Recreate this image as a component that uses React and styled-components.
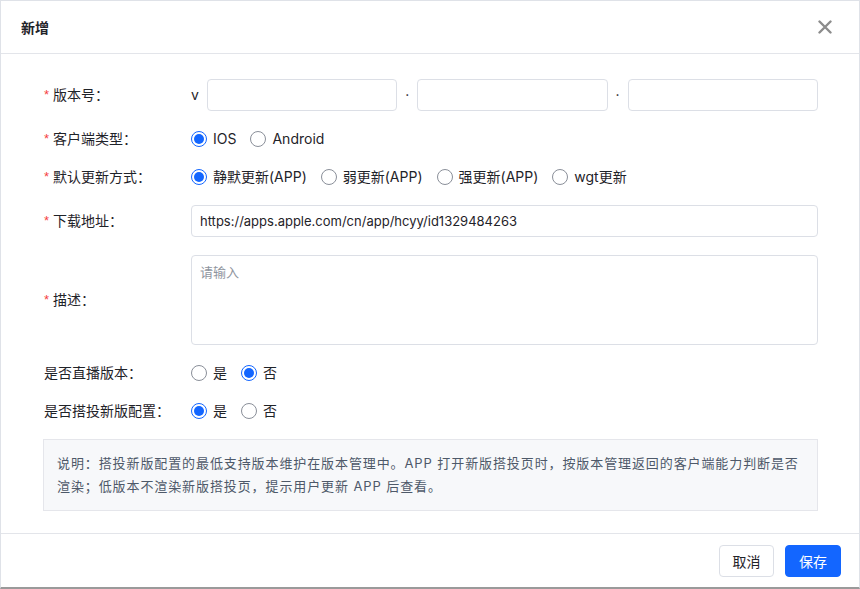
import React from 'react';
import styled, { createGlobalStyle } from 'styled-components';

const GlobalStyle = createGlobalStyle`
  html, body {
    margin: 0;
    padding: 0;
    background: #fff;
  }
  * {
    box-sizing: border-box;
  }
  body {
    font-family: Inter, "Noto Sans CJK SC", sans-serif;
    color: #1f2329;
  }
`;

const Dialog = styled.div`
  display: flex;
  flex-direction: column;
  height: 589px;
  border: 1px solid #dfe2e8;
  border-bottom: 2px solid #9a9a9a;
  background: #fff;
`;

const Header = styled.div`
  display: flex;
  align-items: center;
  justify-content: space-between;
  height: 53px;
  padding: 0 27px 0 20px;
  border-bottom: 1px solid #e3e5ea;
`;

const Title = styled.h3`
  margin: 0;
  font-size: 14px;
  font-weight: 700;
  color: #1f2329;
`;

const CloseButton = styled.button`
  display: flex;
  padding: 0;
  border: none;
  background: none;
  cursor: pointer;
`;

const Body = styled.div`
  flex: 1;
  display: flex;
  flex-direction: column;
  gap: 18px;
  padding: 25px 41px 0 42px;
`;

const FormItem = styled.div`
  display: grid;
  grid-template-columns: 148px 1fr;
  align-items: center;
  height: ${(p) => (p.$compact ? '20px' : 'auto')};
  min-height: ${(p) => (p.$compact ? '20px' : '32px')};
  line-height: 20px;
`;

const Label = styled.label`
  display: flex;
  align-items: center;
  font-size: 14px;
  color: #1f2329;
  padding-left: ${(p) => (p.$required ? '0' : '1px')};
`;

const Star = styled.span`
  color: #f53f3f;
  font-family: "Liberation Sans", sans-serif;
  font-size: 13px;
  width: 9px;
  margin-left: 1px;
`;

const VersionGroup = styled.div`
  display: flex;
  align-items: center;
`;

const Prefix = styled.span`
  font-size: 14px;
  color: #1f2329;
  margin-right: 8px;
`;

const Dot = styled.span`
  width: 20px;
  text-align: center;
  font-size: 14px;
  color: #1f2329;
`;

const Input = styled.input`
  flex: 1;
  min-width: 0;
  width: 100%;
  height: 32px;
  padding: 0 8px;
  border: 1px solid #dcdfe6;
  border-radius: 4px;
  font-family: Inter, "Noto Sans CJK SC", sans-serif;
  font-size: 13px;
  color: #1f2329;
  outline: none;
`;

const TextArea = styled.textarea`
  display: block;
  width: 100%;
  height: 90px;
  padding: 6px 8px;
  border: 1px solid #dcdfe6;
  border-radius: 4px;
  font-family: Inter, "Noto Sans CJK SC", sans-serif;
  font-size: 13px;
  color: #1f2329;
  resize: none;
  outline: none;
  &::placeholder {
    color: #8f959e;
  }
`;

const RadioGroup = styled.div`
  display: flex;
  align-items: center;
  gap: 14px;
`;

const RadioItem = styled.span`
  display: flex;
  align-items: center;
  gap: 6px;
  font-size: 14px;
  color: #1f2329;
  cursor: pointer;
`;

const Circle = styled.span`
  position: relative;
  width: 16px;
  height: 16px;
  border-radius: 50%;
  border: 1px solid ${(p) => (p.$checked ? '#1366ff' : '#8a8f99')};
  background: #fff;
  &::after {
    content: '';
    display: ${(p) => (p.$checked ? 'block' : 'none')};
    position: absolute;
    left: 2px;
    top: 2px;
    width: 10px;
    height: 10px;
    border-radius: 50%;
    background: #1366ff;
  }
`;

const Note = styled.div`
  padding: 12px 13px;
  background: #f7f8fa;
  border: 1px solid #e5e6eb;
  font-size: 13px;
  letter-spacing: 0.9px;
  line-height: 23px;
  color: #4e5969;
`;

const Footer = styled.div`
  display: flex;
  align-items: center;
  justify-content: flex-end;
  gap: 11px;
  height: 54px;
  padding: 0 18px 0 0;
  border-top: 1px solid #e3e5ea;
`;

const Button = styled.button`
  width: ${(p) => (p.$primary ? '56px' : '55px')};
  height: 32px;
  padding: 0;
  border-radius: 4px;
  font-family: Inter, "Noto Sans CJK SC", sans-serif;
  font-size: 14px;
  cursor: pointer;
  border: 1px solid ${(p) => (p.$primary ? '#1366ff' : '#dcdfe6')};
  background: ${(p) => (p.$primary ? '#1366ff' : '#fff')};
  color: ${(p) => (p.$primary ? '#fff' : '#1f2329')};
`;

function Radio({ checked, children }) {
  return (
    <RadioItem>
      <Circle $checked={checked} />
      {children}
    </RadioItem>
  );
}

function Field({ label, required, compact, children }) {
  return (
    <FormItem $compact={compact}>
      <Label $required={required}>
        {required && <Star>*</Star>}
        {label}
      </Label>
      <div>{children}</div>
    </FormItem>
  );
}

export default function App() {
  return (
    <>
      <GlobalStyle />
      <Dialog>
        <Header>
          <Title>新增</Title>
          <CloseButton aria-label="close">
            <svg width="14" height="14" viewBox="0 0 14 14">
              <path d="M1.5 1.5 L12.5 12.5 M12.5 1.5 L1.5 12.5" stroke="#8c8c8c" strokeWidth="2.4" strokeLinecap="round" />
            </svg>
          </CloseButton>
        </Header>
        <Body>
          <Field label="版本号：" required>
            <VersionGroup>
              <Prefix>v</Prefix>
              <Input />
              <Dot>·</Dot>
              <Input />
              <Dot>·</Dot>
              <Input />
            </VersionGroup>
          </Field>
          <Field label="客户端类型：" required compact>
            <RadioGroup>
              <Radio checked>IOS</Radio>
              <Radio>Android</Radio>
            </RadioGroup>
          </Field>
          <Field label="默认更新方式：" required compact>
            <RadioGroup>
              <Radio checked>静默更新(APP)</Radio>
              <Radio>弱更新(APP)</Radio>
              <Radio>强更新(APP)</Radio>
              <Radio>wgt更新</Radio>
            </RadioGroup>
          </Field>
          <Field label="下载地址：" required>
            <Input defaultValue="https://apps.apple.com/cn/app/hcyy/id1329484263" />
          </Field>
          <Field label="描述：" required>
            <TextArea placeholder="请输入" />
          </Field>
          <Field label="是否直播版本：" compact>
            <RadioGroup>
              <Radio>是</Radio>
              <Radio checked>否</Radio>
            </RadioGroup>
          </Field>
          <Field label="是否搭投新版配置：" compact>
            <RadioGroup>
              <Radio checked>是</Radio>
              <Radio>否</Radio>
            </RadioGroup>
          </Field>
          <Note>
            说明：搭投新版配置的最低支持版本维护在版本管理中。APP 打开新版搭投页时，按版本管理返回的客户端能力判断是否渲染；低版本不渲染新版搭投页，提示用户更新 APP 后查看。
          </Note>
        </Body>
        <Footer>
          <Button>取消</Button>
          <Button $primary>保存</Button>
        </Footer>
      </Dialog>
    </>
  );
}
